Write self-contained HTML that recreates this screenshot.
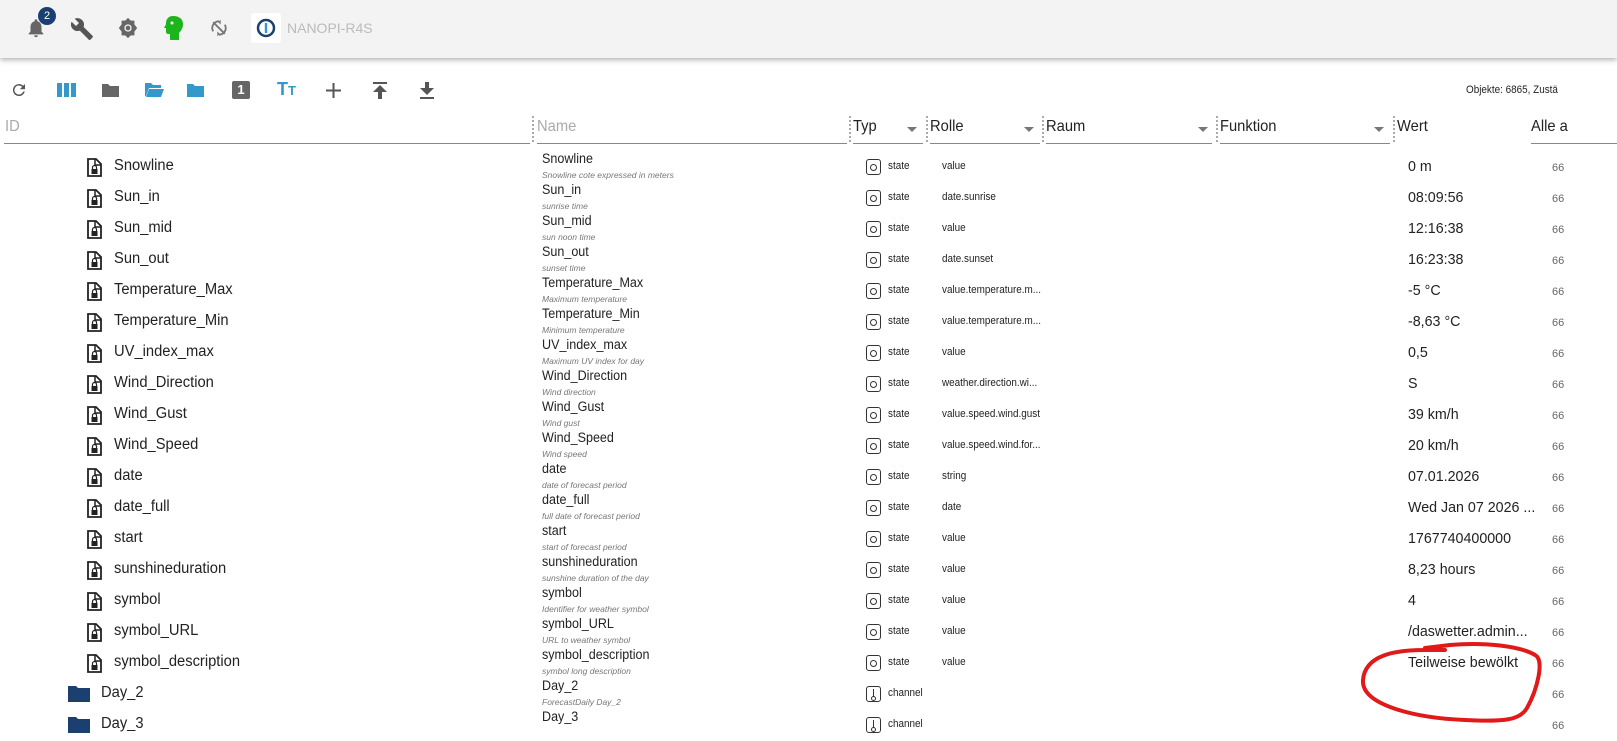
<!DOCTYPE html>
<html><head><meta charset="utf-8">
<style>
*{margin:0;padding:0;box-sizing:border-box}
body{width:1617px;height:741px;overflow:hidden;background:#fff;font-family:"Liberation Sans",sans-serif;color:#222;position:relative}
.top{position:absolute;left:0;top:0;width:1617px;height:58px;background:#f3f3f3;box-shadow:0 2px 5px rgba(0,0,0,.3)}
.a{position:absolute;white-space:nowrap}
.hd{position:absolute;top:118px;font-size:16px;color:#222;transform:scaleX(.92);transform-origin:left}
.ul{position:absolute;top:143px;height:1px;background:#888}
.dot{position:absolute;top:116px;height:26px;border-left:2px dotted #aaa}
.tri{position:absolute;top:127px;width:0;height:0;border-left:5px solid transparent;border-right:5px solid transparent;border-top:5px solid #777}
.id{font-size:15.5px;transform:scaleX(.95);transform-origin:left}
.nm{font-size:13.5px;transform:scaleX(.93);transform-origin:left}
.ds{font-size:8.5px;font-style:italic;color:#777}
.sm{font-size:11px;transform:scaleX(.9);transform-origin:left}
.wv{font-size:15px;transform:scaleX(.95);transform-origin:left}
.gr{font-size:11px;color:#666}
.box{position:absolute;width:15px;height:16px;border:1px solid #333;border-radius:3px}
.box i{position:absolute;left:3px;top:4px;width:7px;height:7px;border:1px solid #333;border-radius:50%}
</style></head><body>
<div class="top"></div>
<!-- top icons -->
<svg class="a" style="left:25px;top:17px" width="22" height="22" viewBox="0 0 24 24"><path fill="#666" d="M12 22a2 2 0 0 0 2-2h-4a2 2 0 0 0 2 2zm6-6v-5c0-3.1-1.6-5.6-4.5-6.3V4a1.5 1.5 0 0 0-3 0v.7C7.6 5.4 6 7.9 6 11v5l-2 2v1h16v-1z"/></svg>
<div class="a" style="left:38px;top:7px;width:18px;height:18px;border-radius:50%;background:#1b3f6e;color:#fff;font-size:11px;text-align:center;line-height:18px">2</div>
<svg class="a" style="left:70px;top:17px" width="24" height="24" viewBox="0 0 24 24"><path fill="#555" d="M22.7 19l-9.1-9.1c.9-2.3.4-5-1.5-6.9-2-2-5-2.4-7.4-1.3L9 6 6 9 1.6 4.7C.4 7.1.9 10.1 2.9 12.1c1.9 1.9 4.6 2.4 6.9 1.5l9.1 9.1c.4.4 1 .4 1.4 0l2.3-2.3c.5-.4.5-1.1.1-1.4z"/></svg>
<svg class="a" style="left:117px;top:17px" width="22" height="22" viewBox="0 0 24 24"><path fill="#666" d="M12 1l3 3h4v4l3 4-3 4v4h-4l-3 3-3-3H5v-4l-3-4 3-4V4h4z"/><circle cx="12" cy="12" r="4" fill="#f3f3f3"/><circle cx="12" cy="12" r="2.6" fill="#666"/></svg>
<svg class="a" style="left:164px;top:15px" width="20" height="26" viewBox="0 0 20 26"><path fill="#1cb51c" d="M9 1C4 1 2 5 2 8c0 2-1 3-2 5h2v4c0 1 1 2 2 2h2v6h9v-7c2-2 4-5 4-9 0-5-4-8-10-8z"/><circle cx="8" cy="8" r="1.5" fill="#fff"/></svg>
<svg class="a" style="left:209px;top:18px" width="20" height="20" viewBox="0 0 24 24"><path fill="none" stroke="#777" stroke-width="2.2" d="M5 5l14 14M12 4a8 8 0 0 0-7 12M12 20a8 8 0 0 0 7-12"/><path fill="#777" d="M14 2l-3 3 3 3zM10 16l3 3-3 3z"/></svg>
<div class="a" style="left:251px;top:13px;width:30px;height:30px;background:#fff;border-radius:3px"></div>
<svg class="a" style="left:256px;top:18px" width="20" height="20" viewBox="0 0 20 20"><circle cx="10" cy="10" r="8" fill="none" stroke="#1b3f6e" stroke-width="2.5"/><rect x="8.8" y="5" width="2.4" height="10" fill="#3399cc"/></svg>
<div class="a" style="left:287px;top:20px;font-size:14px;color:#bbb">NANOPI-R4S</div>
<!-- toolbar -->
<svg class="a" style="left:10px;top:81px" width="18" height="18" viewBox="0 0 24 24"><path fill="#555" d="M17.6 6.4A8 8 0 1 0 19.7 14h-2.1a6 6 0 1 1-1.4-6.2L13 11h7V4z"/></svg>
<svg class="a" style="left:57px;top:83px" width="19" height="14"><rect x="0" y="0" width="5" height="14" fill="#3399cc"/><rect x="7" y="0" width="5" height="14" fill="#3399cc"/><rect x="14" y="0" width="5" height="14" fill="#3399cc"/></svg>
<svg class="a" style="left:102px;top:83px" width="17" height="14" viewBox="0 0 17 14"><path fill="#666" d="M0 1h6l2 2h9v11H0z"/></svg>
<svg class="a" style="left:145px;top:83px" width="19" height="14" viewBox="0 0 19 14"><path fill="#3399cc" d="M0 0h6l2 2h8v3H4L1 13H0zM4 6h15l-3 8H1z"/></svg>
<svg class="a" style="left:187px;top:83px" width="17" height="14" viewBox="0 0 17 14"><path fill="#3399cc" d="M0 1h6l2 2h9v11H0z"/></svg>
<div class="a" style="left:232px;top:81px;width:18px;height:18px;background:#666;border-radius:2px;color:#fff;font-size:13px;font-weight:bold;text-align:center;line-height:18px">1</div>
<div class="a" style="left:277px;top:79px;color:#3399cc;font-weight:bold;font-size:18px">T<span style="font-size:13px">T</span></div>
<svg class="a" style="left:326px;top:83px" width="15" height="15"><path d="M7.5 0v15M0 7.5h15" stroke="#555" stroke-width="2"/></svg>
<svg class="a" style="left:373px;top:82px" width="14" height="17" viewBox="0 0 14 17"><rect width="14" height="2" fill="#555"/><path fill="#555" d="M7 3l7 7H9v7H5v-7H0z"/></svg>
<svg class="a" style="left:420px;top:82px" width="14" height="17" viewBox="0 0 14 17"><rect y="15" width="14" height="2" fill="#555"/><path fill="#555" d="M5 0h4v6h5l-7 7-7-7h5z"/></svg>
<div class="a" style="left:1466px;top:84px;font-size:11px;transform:scaleX(.9);transform-origin:left">Objekte: 6865, Zustä</div>
<!-- headers -->
<div class="hd" style="left:5px;color:#aaa">ID</div><div class="ul" style="left:4px;width:526px"></div>
<div class="dot" style="left:532px"></div>
<div class="hd" style="left:537px;color:#aaa">Name</div><div class="ul" style="left:537px;width:310px"></div>
<div class="dot" style="left:849px"></div>
<div class="hd" style="left:853px">Typ</div><div class="tri" style="left:907px"></div><div class="ul" style="left:853px;width:70px"></div>
<div class="dot" style="left:926px"></div>
<div class="hd" style="left:930px">Rolle</div><div class="tri" style="left:1024px"></div><div class="ul" style="left:930px;width:110px"></div>
<div class="dot" style="left:1042px"></div>
<div class="hd" style="left:1046px">Raum</div><div class="tri" style="left:1198px"></div><div class="ul" style="left:1046px;width:166px"></div>
<div class="dot" style="left:1216px"></div>
<div class="hd" style="left:1220px">Funktion</div><div class="tri" style="left:1374px"></div><div class="ul" style="left:1220px;width:170px"></div>
<div class="dot" style="left:1393px"></div>
<div class="hd" style="left:1397px">Wert</div>
<div class="hd" style="left:1531px">Alle a</div><div class="ul" style="left:1531px;width:86px"></div>
<!-- rows -->
<div id="rows"></div>
<svg class="a" style="left:1355px;top:620px" width="200" height="110" viewBox="0 0 200 110"><path d="M90 30 L70 30 C40 30 10 35 8 60 C6 85 60 98 110 100 C150 102 165 100 172 88 C182 70 190 40 180 35 C165 26 130 22 95 25 L70 28" fill="none" stroke="#e01919" stroke-width="4" stroke-linecap="round"/></svg>
<script>
var R=[["Snowline","Snowline cote expressed in meters","value","0 m"],["Sun_in","sunrise time","date.sunrise","08:09:56"],["Sun_mid","sun noon time","value","12:16:38"],["Sun_out","sunset time","date.sunset","16:23:38"],["Temperature_Max","Maximum temperature","value.temperature.m...","-5 °C"],["Temperature_Min","Minimum temperature","value.temperature.m...","-8,63 °C"],["UV_index_max","Maximum UV index for day","value","0,5"],["Wind_Direction","Wind direction","weather.direction.wi...","S"],["Wind_Gust","Wind gust","value.speed.wind.gust","39 km/h"],["Wind_Speed","Wind speed","value.speed.wind.for...","20 km/h"],["date","date of forecast period","string","07.01.2026"],["date_full","full date of forecast period","date","Wed Jan 07 2026 ..."],["start","start of forecast period","value","1767740400000"],["sunshineduration","sunshine duration of the day","value","8,23 hours"],["symbol","Identifier for weather symbol","value","4"],["symbol_URL","URL to weather symbol","value","/daswetter.admin..."],["symbol_description","symbol long description","value","Teilweise bewölkt"]];
var h="",file='<svg width="15" height="19" viewBox="0 0 15 19"><path d="M1 1h8l5 5v12H1z" fill="none" stroke="#222" stroke-width="1.8"/><path d="M8 1v6h6" fill="none" stroke="#222" stroke-width="1.5"/><rect x="4.5" y="11" width="6" height="5" fill="#222"/><path d="M5.5 11V9.5a2 2 0 0 1 4 0V11" fill="none" stroke="#222" stroke-width="1.2"/></svg>';
function row(i,id,ds,role,val,folder,typ){var y=152+i*31;
h+='<div class="a" style="left:'+(folder?68:87)+'px;top:'+(y+6)+'px">'+(folder?'<svg width="22" height="17" viewBox="0 0 22 17"><path fill="#1b3f6e" d="M0 1h8l2 2h12v14H0z"/></svg>':file)+'</div>';
h+='<div class="a id" style="left:'+(folder?101:114)+'px;top:'+(y+5)+'px">'+id+'</div>';
h+='<div class="a nm" style="left:542px;top:'+(y-1)+'px">'+id+'</div>';
h+='<div class="a ds" style="left:542px;top:'+(y+18)+'px">'+ds+'</div>';
h+='<div class="box" style="left:866px;top:'+(y+7)+'px">'+(typ=="channel"?'<i style="left:4px;top:9px;width:5px;height:5px"></i><b style="position:absolute;left:6px;top:2px;width:1px;height:8px;background:#333"></b>':'<i></i>')+'</div>';
h+='<div class="a sm" style="left:888px;top:'+(y+8)+'px">'+(typ||"state")+'</div>';
h+='<div class="a sm" style="left:942px;top:'+(y+8)+'px">'+role+'</div>';
h+='<div class="a wv" style="left:1408px;top:'+(y+6)+'px">'+val+'</div>';
h+='<div class="a gr" style="left:1552px;top:'+(y+10)+'px">66</div>';}
R.forEach(function(r,i){row(i,r[0],r[1],r[2],r[3])});
row(17,"Day_2","ForecastDaily Day_2","","",1,"channel");
row(18,"Day_3","","","",1,"channel");
document.getElementById("rows").innerHTML=h;
</script>
</body></html>
